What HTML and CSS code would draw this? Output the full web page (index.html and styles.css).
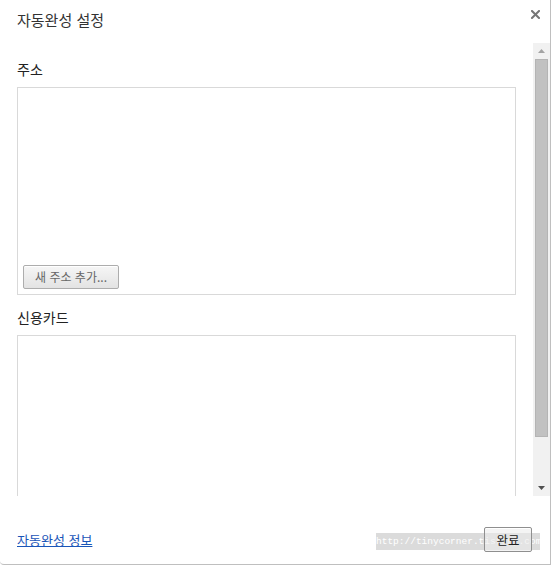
FILE: index.html
```html
<!DOCTYPE html>
<html lang="ko">
<head>
<meta charset="utf-8">
<title>자동완성 설정</title>
<link rel="stylesheet" href="styles.css">
</head>
<body>
<div class="dialog">
  <div class="header">
    <h1 class="title">자동완성 설정</h1>
    <button class="close" aria-label="닫기">
      <svg width="9" height="9" viewBox="0 0 9 9"><path d="M1 1L8 8M8 1L1 8" stroke="#767676" stroke-width="2" stroke-linecap="square"/></svg>
    </button>
  </div>
  <div class="scroller">
    <div class="content">
      <h2 class="section-title">주소</h2>
      <div class="list address-list">
        <button class="btn">새 주소 추가...</button>
      </div>
      <h2 class="section-title card-title">신용카드</h2>
      <div class="list card-list"></div>
    </div>
    <div class="scrollbar">
      <div class="arrow up"><svg width="7" height="4" viewBox="0 0 7 4"><path d="M0 4L3.5 0L7 4Z" fill="#a3a3a3"/></svg></div>
      <div class="track"><div class="thumb"></div></div>
      <div class="arrow down"><svg width="7" height="4" viewBox="0 0 7 4"><path d="M0 0L3.5 4L7 0Z" fill="#505050"/></svg></div>
    </div>
  </div>
  <div class="footer">
    <a class="link" href="#">자동완성 정보</a>
    <button class="btn done">완료</button>
  </div>
  <div class="watermark">http://tinycorner.tistory.com</div>
</div>
</body>
</html>
```
FILE: styles.css
```css
html, body {
  margin: 0;
  padding: 0;
  background: #fff;
}
body {
  font-family: "Noto Sans CJK KR", "Noto Sans", sans-serif;
  color: #222;
}
.dialog {
  position: relative;
  width: 550px;
  height: 564px;
  border-right: 1px solid #bfbfbf;
  border-bottom: 1px solid #bfbfbf;
  border-bottom-left-radius: 4px;
  display: flex;
  flex-direction: column;
  overflow: hidden;
}
.header {
  height: 43px;
  box-sizing: border-box;
  padding: 10px 0 0 17px;
  display: flex;
  justify-content: space-between;
  align-items: flex-start;
}
.title {
  margin: 0;
  font-size: 15px;
  font-weight: normal;
  line-height: 20px;
  color: #333;
}
.close {
  border: 0;
  background: none;
  padding: 0;
  margin: 0 10px 0 0;
  width: 9px;
  height: 9px;
  display: flex;
}
.scroller {
  height: 453px;
  display: flex;
  overflow: hidden;
}
.content {
  width: 533px;
  box-sizing: border-box;
  padding: 16px 17px 0 17px;
}
.section-title {
  margin: 0 0 8px 0;
  font-size: 14px;
  font-weight: normal;
  line-height: 20px;
  color: #222;
}
.card-title {
  margin-top: 12px;
}
.list {
  height: 208px;
  box-sizing: border-box;
  border: 1px solid #d9d9d9;
  padding: 5px;
  display: flex;
  flex-direction: column;
  justify-content: flex-end;
  align-items: flex-start;
}
.btn {
  font-family: "Noto Sans CJK KR", "Noto Sans", sans-serif;
  font-size: 12px;
  line-height: 16px;
  color: #444;
  height: 24px;
  padding: 0 8px;
  border: 1px solid #adadad;
  border-radius: 2px;
  background: linear-gradient(#f6f6f6, #e3e3e3);
  box-shadow: inset 0 1px 0 #fff;
}
.address-list .btn {
  width: 96px;
  color: #666;
}
.scrollbar {
  width: 17px;
  display: flex;
  flex-direction: column;
  background: #f1f1f1;
}
.arrow {
  height: 16px;
  display: flex;
  align-items: center;
  justify-content: center;
}
.track {
  flex: 1;
  padding: 0 2px;
  display: flex;
  flex-direction: column;
}
.thumb {
  height: 378px;
  box-sizing: border-box;
  background: #c1c1c1;
  border: 1px solid #b4b4b4;
}
.footer {
  flex: 1;
  box-sizing: border-box;
  padding: 31px 18px 0 17px;
  display: flex;
  justify-content: space-between;
  align-items: flex-start;
}
.link {
  font-size: 13px;
  line-height: 18px;
  margin-top: 4px;
  color: #1a55b8;
  text-decoration: underline;
}
.done {
  position: relative;
  z-index: 1;
  width: 48px;
  height: 25px;
  padding: 0;
  color: #222;
  font-size: 12.5px;
  background: rgba(235, 235, 235, 0.55);
  border-color: #8f8f8f;
}
.watermark {
  position: absolute;
  left: 376px;
  top: 533px;
  width: 164px;
  height: 17px;
  background: rgba(200, 200, 200, 0.65);
  color: #fff;
  font-family: "Liberation Mono", monospace;
  font-size: 9.5px;
  line-height: 17px;
  text-align: center;
  white-space: nowrap;
  overflow: hidden;
}
```
